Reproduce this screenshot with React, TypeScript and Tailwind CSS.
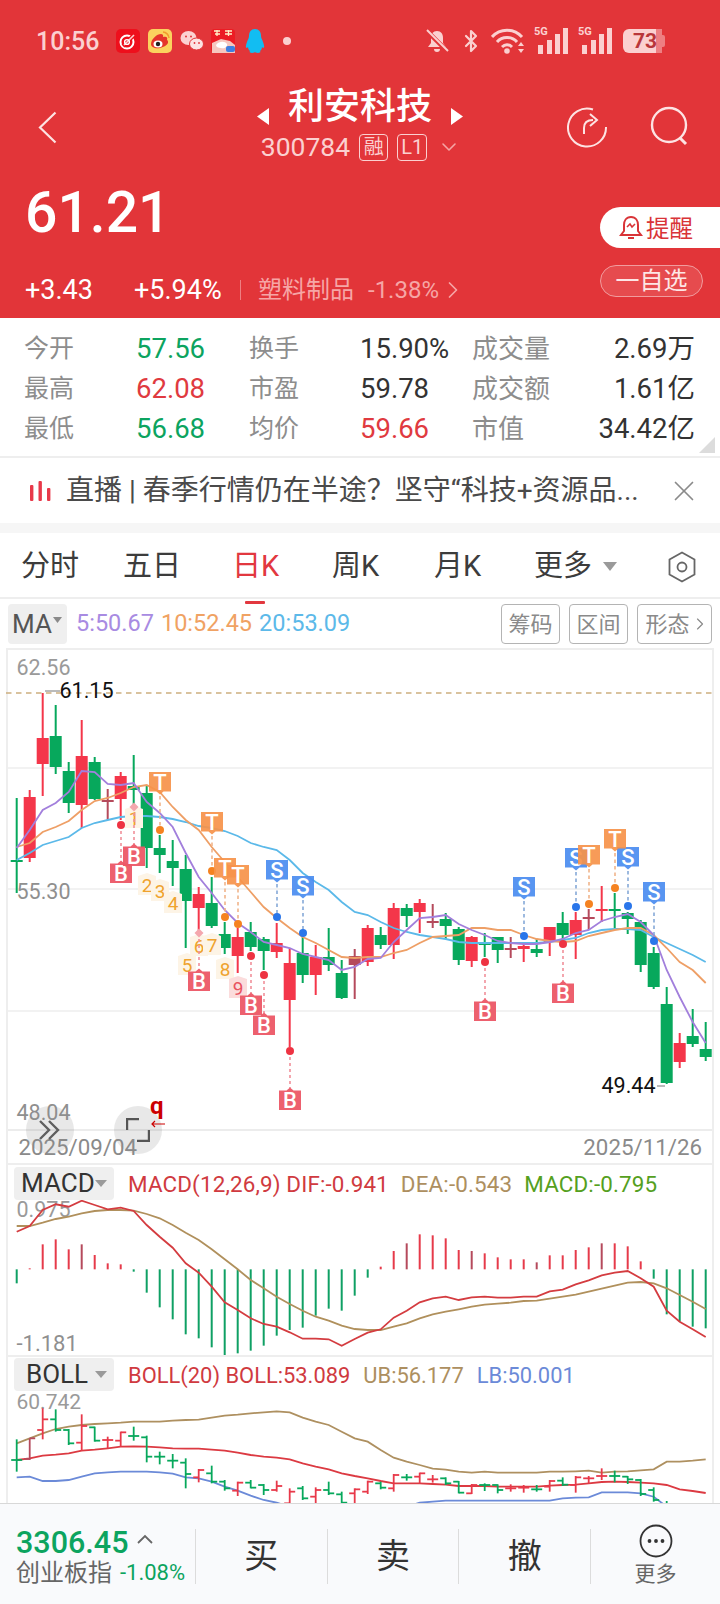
import React from "react";
import { ChevronRight, ChevronDown, X, Bluetooth } from "lucide-react";

const RED = "#f4364a";
const DARK_RED = "#b54a5c";
const GREEN = "#07a85c";

const cx = (i: number) => 16.7 + 13 * i;

// [colour, high, low, bodyTop, bodyBottom]; d = muted doji red
type Candle = [string, number, number, number, number];
const candles: Candle[] = [
  ["g", 798, 893, 860, 861.5], ["r", 790, 862, 797, 858], ["r", 693, 796, 738, 764], ["g", 705, 774, 736, 767],
  ["g", 762, 813, 771, 803], ["r", 720, 828, 756, 805], ["g", 757, 800, 762, 799], ["d", 789, 820, 800, 801],
  ["r", 772, 820, 776, 799], ["g", 755, 807, 786, 790], ["g", 785, 868, 793, 848], ["g", 835, 873, 848, 855],
  ["g", 840, 886, 861, 868], ["g", 855, 948, 869, 901], ["r", 887, 933, 894, 908], ["g", 877, 928, 903, 926],
  ["g", 922, 954, 934, 948], ["r", 928, 973, 937, 956], ["g", 922, 951, 932, 947], ["g", 937, 970, 939, 951],
  ["r", 923, 958, 943, 952], ["r", 948, 1047, 963, 1000], ["g", 937, 983, 953, 975], ["r", 945, 995, 957, 975],
  ["g", 928, 971, 957, 965], ["g", 960, 999, 973, 998], ["d", 949, 999, 956, 965], ["r", 925, 966, 928, 962],
  ["g", 927, 949, 935, 945], ["r", 903, 959, 908, 945], ["g", 904, 927, 908, 916], ["r", 899, 933, 903, 912],
  ["d", 904, 928, 921, 922], ["g", 913, 939, 919, 926], ["g", 927, 965, 929, 960], ["r", 936, 967, 937, 961],
  ["g", 933, 957, 943, 944], ["g", 937, 963, 937, 950], ["d", 937, 958, 948, 949], ["r", 942, 962, 946, 949],
  ["g", 939, 957, 949, 953], ["r", 927, 956, 927, 942], ["g", 912, 943, 923, 935], ["r", 912, 959, 920, 935],
  ["d", 909, 930, 917, 918.5], ["r", 886, 922, 909, 911], ["g", 893, 928, 909, 911], ["g", 912, 934, 913, 919],
  ["g", 920, 972, 922, 965], ["g", 947, 989, 953, 987], ["g", 987, 1084, 1004, 1083], ["r", 1033, 1068, 1043, 1062],
  ["g", 1009, 1047, 1036, 1044], ["g", 1022, 1061, 1049, 1057],
];

const ma5 = [848,830,810,803,792,771,772,784,785,783,802,813,827,853,877,893,910,923,932,942,945,948,954,957,960,970,967,959,958,942,930,918,917,915,924,930,935,941,943,944,944,942,939,933,930,921,917,914,922,935,970,997,1022,1043];
const ma10 = [847,843,832,827,821,810,801,798,793,787,785,792,807,820,830,847,862,877,892,907,918,928,937,943,950,957,958,957,957,953,950,943,937,936,935,928,928,930,930,935,939,941,942,941,936,933,930,928,928,935,948,962,970,983];
const ma20 = [860,853,845,841,837,828,823,820,817,816,816,817,819,822,826,828,831,836,843,847,850,860,873,882,890,902,912,915,922,928,932,935,937,939,942,943,943,943,943,943,943,942,940,938,933,930,929,929,930,937,943,949,955,962];

const dif = [245,228,180,163,170,152,165,178,173,183,225,260,293,340,368,410,457,480,505,522,530,547,566,566,568,587,567,548,538,503,482,457,445,440,450,442,440,443,443,440,440,424,419,403,391,376,368,363,385,410,482,515,538,561];
const dea = [228,228,218,207,200,190,183,180,180,182,192,205,225,248,270,298,328,358,390,415,440,462,482,500,512,527,537,540,540,530,520,505,493,485,478,470,464,461,458,453,452,446,440,434,425,416,407,398,396,400,415,435,455,477];
const hist = [400,355,283,268,298,283,315,340,343,365,428,472,508,553,565,592,617,610,602,587,557,540,533,497,476,482,437,383,350,303,280,253,256,265,300,303,310,322,328,328,337,316,316,300,292,280,280,289,334,386,493,515,530,535];

const ub = [280,265,250,237,230,225,222,220,218,215,215,215,212,210,209,203,197,194,190,187,184,187,203,215,225,245,265,275,300,323,335,345,356,359,365,368,365,368,368,368,368,365,365,364,362,368,365,364,361,358,335,335,332,328];
const mid = [330,325,317,314,310,302,299,295,290,289,290,292,295,296,296,299,302,308,315,320,323,328,340,350,358,370,378,385,393,400,400,400,402,404,408,408,408,410,410,410,410,407,405,404,400,396,395,396,398,400,405,418,423,429];
const lb = [382,380,393,393,390,380,370,367,365,365,365,367,371,382,385,395,410,422,437,450,458,470,478,485,490,495,495,495,490,480,470,458,455,452,452,452,452,452,452,452,452,452,445,443,442,427,427,427,430,440,470,500,520,540];

// [colour, high, low, open, close] in panel units of a third of a pixel
const bars: [string, number, number, number, number][] = [
  ["g",268,365,330,330],["d",265,330,327,265],["r",175,268,240,208],["g",178,245,208,240],["g",237,285,240,280],
  ["r",193,302,278,228],["g",230,275,232,272],["r",260,295,270,270],["r",245,290,272,247],["g",230,272,258,258],
  ["g",257,337,262,320],["g",305,343,320,320],["g",312,355,332,332],["g",325,415,338,372],["r",357,397,382,360],
  ["g",347,400,370,395],["g",390,422,395,415],["r",395,438,422,398],["g",390,415,398,413],["g",402,435,405,420],
  ["r",392,425,420,408],["r",415,470,460,425],["g",408,450,415,445],["r",412,470,440,420],["g",395,435,420,430],
  ["g",425,470,433,458],["r",415,470,430,418],["r",392,432,425,395],["g",395,418,400,413],["r",372,425,415,375],
  ["g",372,392,382,382],["r",368,400,380,370],["r",375,398,388,388],["g",382,405,385,400],["g",393,430,395,428],
  ["r",402,432,430,405],["g",400,423,405,405],["g",403,430,405,420],["r",403,425,415,415],["r",405,428,413,413],
  ["g",405,425,418,418],["r",390,425,410,393],["g",382,408,392,404],["r",378,428,405,382],["r",378,400,385,385],
  ["r",355,390,378,378],["g",362,397,378,378],["g",378,402,380,388],["g",387,438,390,432],["g",412,455,420,450],
  ["g",453,490,470,480],
];

const line = (ys: number[], f: (v: number) => number = (v) => v) =>
  ys.map((v, i) => `${cx(i).toFixed(1)},${f(v).toFixed(1)}`).join(" ");

type Sig = { x: number; top: number; dot: number; diamond?: boolean };
const buys: Sig[] = [
  { x: 121, top: 861, dot: 825 }, { x: 134, top: 844, dot: 807, diamond: true }, { x: 199, top: 969, dot: 933, diamond: true },
  { x: 251, top: 993, dot: 956 }, { x: 264, top: 1013, dot: 975 }, { x: 290, top: 1088, dot: 1051 },
  { x: 485, top: 999, dot: 962 }, { x: 563, top: 981, dot: 944 },
];
const tops: Sig[] = [
  { x: 160, top: 772, dot: 830 }, { x: 212, top: 812, dot: 871 }, { x: 225, top: 858, dot: 917 }, { x: 238, top: 865, dot: 924 },
  { x: 589, top: 845, dot: 904 }, { x: 615, top: 829, dot: 888 },
];
const sells: Sig[] = [
  { x: 277, top: 860, dot: 917 }, { x: 303, top: 876, dot: 933 }, { x: 524, top: 877, dot: 936 }, { x: 576, top: 848, dot: 907 },
  { x: 628, top: 847, dot: 906 }, { x: 654, top: 882, dot: 941 },
];
const counts: [string, number, number][] = [
  ["1", 134, 818], ["2", 147, 885], ["3", 160, 891], ["4", 173, 903], ["5", 187, 965], ["6", 199, 946], ["7", 212, 945], ["8", 225, 969],
];

function DownFlag({ s, fill, dash, dotFill, label }: { s: Sig; fill: string; dash: string; dotFill: string; label: string }) {
  return (
    <g>
      <line x1={s.x} x2={s.x} y1={s.top + 24} y2={s.dot} stroke={dash} strokeWidth={1.6} strokeDasharray="3.5 3" />
      <circle cx={s.x} cy={s.dot} r={4} fill={dotFill} />
      <path d={`M${s.x - 11} ${s.top}h22v19.5h-7.5l-3.5 3-3.5-3h-7.5z`} fill={fill} fillOpacity={0.92} />
      <text x={s.x} y={s.top + 18} textAnchor="middle" fontSize={22} fontWeight={500} fill="#fff">{label}</text>
    </g>
  );
}

function BuyFlag({ s }: { s: Sig }) {
  return (
    <g>
      <line x1={s.x} x2={s.x} y1={s.dot} y2={s.top} stroke="#f0909a" strokeWidth={1.6} strokeDasharray="3 3" />
      {s.diamond ? (
        <path d={`M${s.x} ${s.dot - 4.5}l4.5 4.5-4.5 4.5-4.5-4.5z`} fill="#f4a7ad" />
      ) : (
        <circle cx={s.x} cy={s.dot} r={4} fill="#ee3342" />
      )}
      <path d={`M${s.x - 11} ${s.top + 2.5}h7.5l3.5-3 3.5 3h7.5v19.5h-22z`} fill="#ec5766" fillOpacity={0.95} />
      <text x={s.x} y={s.top + 20} textAnchor="middle" fontSize={22} fontWeight={500} fill="#fff">B</text>
    </g>
  );
}

function CountTag({ n, x, y, pink }: { n: string; x: number; y: number; pink?: boolean }) {
  return (
    <g>
      <path d={`M${x - 9} ${y - 9}l9-3 9 3v19h-18z`} fill={pink ? "#fbdcdc" : "#fdf4e6"} />
      <text x={x} y={y + 7} textAnchor="middle" fontSize={19} fill={pink ? "#e8515f" : "#efa32e"}>{n}</text>
    </g>
  );
}

function PriceChart() {
  const gridYs = [768, 889, 1011];
  return (
    <svg viewBox="0 648 720 515" className="absolute inset-0 h-full w-full">
      {gridYs.map((y) => (
        <line key={y} x1={8} x2={712} y1={y} y2={y} stroke="#f2f2f2" strokeWidth={2} />
      ))}
      <line x1={8} x2={712} y1={1130} y2={1130} stroke="#ececec" strokeWidth={2} />
      <line x1={6} x2={712} y1={693} y2={693} stroke="#cdaf7f" strokeWidth={1.6} strokeDasharray="5.5 4.5" />
      <text x={16.5} y={675} fontSize={21.5} fill="#9a9a9a">62.56</text>
      <text x={16.5} y={899} fontSize={21.5} fill="#8f8f8f">55.30</text>
      <text x={16.5} y={1120} fontSize={21.5} fill="#8f8f8f">48.04</text>
      {candles.map(([c, hi, lo, t, b], i) => {
        const col = c === "g" ? GREEN : c === "r" ? RED : DARK_RED;
        return (
          <g key={i}>
            <line x1={cx(i)} x2={cx(i)} y1={hi} y2={lo} stroke={col} strokeWidth={2} />
            <rect x={cx(i) - 6} y={t} width={12} height={Math.max(b - t, 2)} fill={col} />
          </g>
        );
      })}
      <polyline points={line(ma20)} fill="none" stroke="#5bb9e9" strokeWidth={1.8} />
      <polyline points={line(ma10)} fill="none" stroke="#ee9f66" strokeWidth={1.8} />
      <polyline points={line(ma5)} fill="none" stroke="#a27fdc" strokeWidth={1.8} />
      <line x1={45} x2={60} y1={691} y2={691} stroke="#777" strokeWidth={1} />
      <text x={59.5} y={698} fontSize={21.5} fill="#111">61.15</text>
      <text x={601.5} y={1093} fontSize={21.5} fill="#111">49.44</text>
      <line x1={657} x2={665} y1={1086} y2={1086} stroke="#777" strokeWidth={1} />
      {counts.map(([n, x, y]) => <CountTag key={n} n={n} x={x} y={y} />)}
      <CountTag n="9" x={238} y={988} pink />
      {buys.map((s) => <BuyFlag key={s.x} s={s} />)}
      {sells.map((s) => <DownFlag key={s.x} s={s} fill="#4a8cf0" dash="#85a9d8" dotFill="#2a76ea" label="S" />)}
      {tops.map((s) => <DownFlag key={s.x} s={s} fill="#f6924a" dash="#f0b48a" dotFill="#f58220" label="T" />)}
      <text x={18.5} y={1155} fontSize={22.3} fill="#8a8a8a">2025/09/04</text>
      <text x={702} y={1155} textAnchor="end" fontSize={22.3} fill="#8a8a8a">2025/11/26</text>
    </svg>
  );
}

function MacdChart() {
  const y = (z: number) => 1150 + z / 3;
  return (
    <svg viewBox="0 1163 720 192" className="absolute inset-0 h-full w-full">
      <text x={16.5} y={1217} fontSize={21.5} fill="#9a9a9a">0.975</text>
      <text x={16.5} y={1351} fontSize={22} fill="#8f8f8f">-1.181</text>
      {hist.map((z, i) => (
        <line key={i} x1={cx(i)} x2={cx(i)} y1={y(358)} y2={y(z)} stroke={z > 358 ? "#0fa064" : i % 5 === 0 ? DARK_RED : "#e63a4a"} strokeWidth={2} />
      ))}
      <polyline points={line(dea, y)} fill="none" stroke="#b0905c" strokeWidth={1.8} />
      <polyline points={line(dif, y)} fill="none" stroke="#d43c40" strokeWidth={1.8} />
    </svg>
  );
}

function BollChart() {
  const y = (z: number) => 1350 + z / 3;
  return (
    <svg viewBox="0 1355 720 148" className="absolute inset-0 h-full w-full">
      <text x={16.5} y={1409} fontSize={21} fill="#9a9a9a">60.742</text>
      <polyline points={line(ub, y)} fill="none" stroke="#ae9060" strokeWidth={1.8} />
      <polyline points={line(lb, y)} fill="none" stroke="#6b8ad8" strokeWidth={1.8} />
      <polyline points={line(mid, y)} fill="none" stroke="#dc3a42" strokeWidth={1.8} />
      {bars.map(([c, hi, lo, o, cl], i) => {
        const col = c === "g" ? GREEN : c === "r" ? "#e8394a" : DARK_RED;
        return (
          <g key={i} stroke={col} strokeWidth={1.8}>
            <line x1={cx(i)} x2={cx(i)} y1={y(hi)} y2={y(lo)} />
            <line x1={cx(i) - 5.5} x2={cx(i)} y1={y(o)} y2={y(o)} />
            <line x1={cx(i)} x2={cx(i) + 5.5} y1={y(cl)} y2={y(cl)} />
          </g>
        );
      })}
    </svg>
  );
}

function AppIcons() {
  return (
    <div className="flex items-center">
      <svg width="24" height="24" viewBox="0 0 24 24" className="ml-[17px]">
        <rect width="24" height="24" rx="5" fill="#ee0f1c" />
        <circle cx="11" cy="13" r="6.5" fill="none" stroke="#fff" strokeWidth="2" />
        <path d="M7 17 19 5" stroke="#ee0f1c" strokeWidth="4" />
        <path d="M8 16 18 6" stroke="#fbd0d0" strokeWidth="1.6" />
        <circle cx="11" cy="13" r="2.4" fill="none" stroke="#fff" strokeWidth="1.4" />
      </svg>
      <svg width="24" height="24" viewBox="0 0 24 24" className="ml-[8px]">
        <rect width="24" height="24" rx="5" fill="#fbd35e" />
        <path d="M3 15c0-5 6-10 10-10 3 0 2 3 2 3 3-1 5 0 4 3 2 1 2 6-7 8-5 1-9-1-9-4z" fill="#e5352b" />
        <ellipse cx="10" cy="15" rx="4.5" ry="3.6" fill="#fff" />
        <circle cx="10" cy="15" r="2.2" fill="#222" />
        <path d="M15 3c3 0 6 3 6 6" fill="none" stroke="#f29a2e" strokeWidth="1.5" />
      </svg>
      <svg width="24" height="24" viewBox="0 0 24 24" className="ml-[8px]">
        <ellipse cx="8.5" cy="9" rx="8" ry="7" fill="#fcd2d2" />
        <ellipse cx="16.5" cy="15" rx="7" ry="6" fill="#fde3e3" stroke="#e23539" strokeWidth="1" />
        <circle cx="6" cy="7.5" r="1" fill="#e23539" />
        <circle cx="11" cy="7.5" r="1" fill="#e23539" />
        <circle cx="14.5" cy="14" r=".9" fill="#e23539" />
        <circle cx="19" cy="14" r=".9" fill="#e23539" />
      </svg>
      <svg width="24" height="24" viewBox="0 0 24 24" className="ml-[7px]">
        <rect width="24" height="24" rx="4" fill="#ec1c24" />
        <path d="M3 2h6M4 5h5M6 1v6M14 2h7M17.5 1v6M14 5h7" stroke="#fff1c8" strokeWidth="1.3" />
        <path d="M1 24V14l9-4 9 2 5 4v8z" fill="#f6c7bf" />
        <path d="M5 16c3-4 9-4 11-1 1 3-3 5-6 4-3 0-5-1-5-3z" fill="#fff" />
        <rect x="15" y="17" width="9" height="6" rx="2" fill="#3f7fe0" />
      </svg>
      <svg width="20" height="24" viewBox="0 0 20 24" className="ml-[10px]">
        <path d="M10 0c4 0 6 3 6 7 0 2 1 3 2 6 1 3 2 6 0 6l-1-1c0 2-1 3-2 4 1 1 0 2-2 2-2 0-3-1-3-1s-1 1-3 1c-2 0-3-1-2-2-1-1-2-2-2-4l-1 1c-2 0-1-3 0-6 1-3 2-4 2-6 0-4 2-7 6-7z" fill="#12bdf2" />
      </svg>
      <span className="ml-[18px] h-[8px] w-[8px] rounded-full bg-[#fbd0d0]" />
    </div>
  );
}

function SignalIcon() {
  return (
    <div className="relative h-[26px] w-[34px]">
      <span className="absolute left-0 top-[-2px] text-[11px] font-bold leading-[12px] text-[#fbd0d0]">5G</span>
      <svg width="34" height="26" viewBox="0 0 34 26" className="absolute inset-0">
        <rect x="4" y="17" width="5" height="9" fill="#fbd0d0" />
        <rect x="13" y="12" width="5" height="14" fill="#fbd0d0" />
        <rect x="21" y="6" width="5" height="20" fill="#fbd0d0" />
        <rect x="29" y="0" width="5" height="26" fill="#fbd0d0" />
      </svg>
    </div>
  );
}

function StatusBar() {
  return (
    <div className="flex h-[82px] items-center pl-[36px] pr-[53px] text-[#fbd0d0]">
      <span className="text-[25px] font-medium leading-none">10:56</span>
      <AppIcons />
      <div className="ml-auto flex items-center">
        <svg width="24" height="24" viewBox="0 0 24 24">
          <path d="M12 2c-4 0-6 3-6 7v5l-3 4h18l-3-4V9c0-4-2-7-6-7zM9 20a3 3 0 0 0 6 0z" fill="#fbd0d0" />
          <path d="M1 1 23 23" stroke="#e23539" strokeWidth="4.5" />
          <path d="M2 1 23 22" stroke="#fbd0d0" strokeWidth="2" />
        </svg>
        <Bluetooth size={24} strokeWidth={2.2} className="ml-[10px]" />
        <svg width="34" height="26" viewBox="0 0 34 26" className="ml-[8px]">
          <path d="M1 9C9 0 23 0 31 9M6 14c5-6 15-6 20 0M11 19c3-3 7-3 10 0" fill="none" stroke="#fbd0d0" strokeWidth="3" />
          <circle cx="16" cy="23" r="2.8" fill="#fbd0d0" />
          <path d="M30 14l3 4h-6zM30 25l3-4h-6z" fill="#fbd0d0" />
        </svg>
        <div className="ml-[9px]"><SignalIcon /></div>
        <div className="ml-[10px]"><SignalIcon /></div>
        <div className="relative ml-[11px] flex h-[24px] w-[44px]">
          <div className="flex h-full w-[33px] items-center justify-end rounded-l-[6px] bg-[#fbd0d0]" />
          <div className="h-full w-[6px] bg-[#ee7f82]" />
          <div className="my-auto h-[12px] w-[3px] rounded-r-[2px] bg-[#ee7f82]" />
          <span className="absolute left-[10px] top-0 text-[21px] font-bold leading-[24px] text-[#b9363a]">73</span>
        </div>
      </div>
    </div>
  );
}

function NavRow() {
  return (
    <div className="grid h-[84px] grid-cols-[1fr_auto_1fr] pt-[5px]">
      <div className="flex items-center pl-[38px]">
        <svg width="19" height="33" viewBox="0 0 19 33" fill="none" stroke="#fde3e3" strokeWidth="2.2">
          <path d="M17.5 1.5 2 16.5l15.5 15" />
        </svg>
      </div>
      <div className="flex flex-col items-center">
        <div className="flex h-[40px] items-center">
          <svg width="12" height="17" viewBox="0 0 12 17" className="mt-[18px]"><path d="M12 0v17L0 8.5z" fill="#fff" /></svg>
          <span className="mx-[19px] text-[36px] font-medium leading-[40px] text-white">利安科技</span>
          <svg width="12" height="17" viewBox="0 0 12 17" className="mt-[18px]"><path d="M0 0v17L12 8.5z" fill="#fff" /></svg>
        </div>
        <div className="flex h-[40px] items-center gap-[9px] pl-[2px] text-[#fbd0d0]">
          <span className="text-[26.5px] leading-none">300784</span>
          <span className="flex h-[27px] w-[29px] items-center justify-center rounded-[4px] border border-[#fbd0d0] text-[20px] leading-none">融</span>
          <span className="flex h-[27px] w-[30px] items-center justify-center rounded-[4px] border border-[#fbd0d0] text-[20px] leading-none">L1</span>
          <ChevronDown size={24} strokeWidth={1.6} className="ml-px text-[#f5a5a5]" />
        </div>
      </div>
      <div className="flex items-center justify-end gap-[40px] pr-[30px]">
        <svg width="42" height="42" viewBox="0 0 42 42" fill="none" stroke="#fde3e3" strokeWidth="2">
          <path d="M27 3.5A19 19 0 1 0 40 21" />
          <path d="M18 28v-6c0-5 3-8 9-8" />
          <path d="M24 8l7 6-7 6" />
        </svg>
        <svg width="42" height="42" viewBox="0 0 42 42" fill="none" stroke="#fde3e3" strokeWidth="2.4">
          <circle cx="21" cy="19" r="17" />
          <path d="M32 32l6 6" strokeWidth="3" />
        </svg>
      </div>
    </div>
  );
}

function QuoteRow() {
  return (
    <div className="flex items-start">
      <div className="flex-1 pl-[25px]">
        <div className="mt-[17px] h-[60px] text-[57px] font-medium leading-[60px] text-white">61.21</div>
        <div className="mt-[27px] flex h-[40px] items-center text-[27px]">
          <span className="w-[109px] text-white">+3.43</span>
          <span className="w-[106px] text-white">+5.94%</span>
          <span className="h-[20px] w-px bg-[#ee7f82]" />
          <span className="ml-[17px] text-[24px] text-[#f6a6a6]">塑料制品</span>
          <span className="ml-[14px] text-[24px] text-[#f6a6a6]">-1.38%</span>
          <ChevronRight size={28} strokeWidth={1.5} className="ml-0 text-[#f6a6a6]" />
        </div>
      </div>
      <div className="w-[120px] pt-[41px]">
        <div className="flex h-[41px] items-center rounded-l-[21px] bg-white pl-[19px] text-[23.5px] text-[#d93438]">
          <svg width="24" height="26" viewBox="0 0 24 26" fill="none" stroke="#d93438" strokeWidth="2">
            <path d="M12 2c-5 0-7 4-7 8v6l-3 4h20l-3-4v-6c0-4-2-8-7-8z" />
            <path d="M8 12l3-3 2 3 3-3" strokeWidth="1.6" />
            <path d="M9 23h6" />
          </svg>
          <span className="ml-[3px] translate-y-[2px]">提醒</span>
        </div>
        <div className="mt-[17px] flex h-[32px] w-[103px] items-center justify-center rounded-full border border-[#f19c9e] bg-[#e64b4e] text-[24px] text-[#fde6e6]">一自选</div>
      </div>
    </div>
  );
}

function Stat({ label, value, tone }: { label: string; value: string; tone: string }) {
  return (
    <>
      <span className="text-[25px] leading-[40px] text-[#8d8d8d]">{label}</span>
      <span className={`text-[27.5px] leading-[40px] ${tone}`}>{value}</span>
    </>
  );
}

function StatsTable() {
  const g = "text-[#0ca45f]";
  const r = "text-[#e03a40]";
  const k = "text-[#333]";
  const tail = "justify-self-end whitespace-nowrap text-[27.5px] leading-[40px] text-[#333]";
  const head = "whitespace-nowrap text-[26px] leading-[40px] text-[#8d8d8d]";
  return (
    <div className="relative h-[140px] border-b-2 border-[#eeeeee] pt-[11px]">
      <div className="grid grid-cols-[112px_113px_111px_112px_100px_123px] pl-[24px]">
        <Stat label="今开" value="57.56" tone={g} />
        <Stat label="换手" value="15.90%" tone={k} />
        <span className={head}>成交量</span>
        <span className={tail}>2.69万</span>
        <Stat label="最高" value="62.08" tone={r} />
        <Stat label="市盈" value="59.78" tone={k} />
        <span className={head}>成交额</span>
        <span className={tail}>1.61亿</span>
        <Stat label="最低" value="56.68" tone={g} />
        <Stat label="均价" value="59.66" tone={r} />
        <span className={head}>市值</span>
        <span className={tail}>34.42亿</span>
      </div>
      <svg width="16" height="16" viewBox="0 0 16 16" className="absolute bottom-[3px] right-[5px]"><path d="M16 0v16H0z" fill="#dcdcdc" /></svg>
    </div>
  );
}

function Banner() {
  return (
    <div className="flex h-[65px] items-center pl-[30px] pt-px">
      <svg width="21" height="20" viewBox="0 0 21 20" fill="#e8394a">
        <rect x="0" y="4" width="3.4" height="16" rx="1" />
        <rect x="8.5" y="0" width="3.4" height="20" rx="1" />
        <rect x="17" y="7" width="3.4" height="13" rx="1" />
      </svg>
      <span className="ml-[15px] w-[601px] whitespace-nowrap text-[28px] leading-none text-[#4a4a4a]">直播 | 春季行情仍在半途？坚守“科技+资源品...</span>
      <X size={34} strokeWidth={1.2} className="text-[#8a8a8a]" />
    </div>
  );
}

function PeriodTabs() {
  return (
    <div className="relative grid h-[66px] grid-cols-[102px_109px_100px_102px_100px_131px_auto] items-center border-b-2 border-[#eeeeee] pl-[21px] pt-[3px] text-[29px] text-[#3c3c3c]">
      <span>分时</span>
      <span>五日</span>
      <span className="relative text-[#e2383f]">
        日K
        <span className="absolute bottom-[-16px] left-[13px] h-[3px] w-[20px] rounded-[1px] bg-[#e2383f]" />
      </span>
      <span>周K</span>
      <span>月K</span>
      <span className="flex items-center">
        更多
        <svg width="14" height="9" viewBox="0 0 14 9" className="ml-[11px]"><path d="M0 0h14L7 9z" fill="#9a9a9a" /></svg>
      </span>
      <svg width="28" height="32" viewBox="0 0 28 32" fill="none" stroke="#666" strokeWidth="1.8" className="ml-[3px]">
        <path d="M14 1.5 26.5 8.5v15L14 30.5 1.5 23.5v-15z" />
        <circle cx="14" cy="16" r="4.5" />
      </svg>
    </div>
  );
}

function MaRow() {
  const chip = "flex h-[40px] items-center justify-center rounded-[4px] border border-[#b4b4b4] text-[22px] text-[#8a8a8a]";
  return (
    <div className="flex h-[49px] items-center px-[8px] pt-px">
      <div className="flex h-[40px] w-[59px] items-center rounded-[4px] bg-[#efefef] pl-[4px] text-[26px] text-[#555]">
        MA
        <svg width="9" height="6" viewBox="0 0 9 6" className="mb-[8px] ml-px"><path d="M0 0h9L4.5 6z" fill="#8a8a8a" /></svg>
      </div>
      <span className="ml-[9px] text-[23.5px] text-[#a88be2]">5:50.67</span>
      <span className="ml-[7px] text-[23.5px] text-[#f0a263]">10:52.45</span>
      <span className="ml-[7px] text-[23.5px] text-[#5cb9e9]">20:53.09</span>
      <div className={`${chip} ml-auto w-[59px]`}>筹码</div>
      <div className={`${chip} ml-[9px] w-[59px]`}>区间</div>
      <div className={`${chip} ml-[9px] w-[75px]`}>
        形态
        <ChevronRight size={20} strokeWidth={1.4} className="mr-[-6px]" />
      </div>
    </div>
  );
}

function IndicatorChip({ name }: { name: string }) {
  return (
    <div className="flex h-[33px] w-[100px] items-center justify-center rounded-[4px] bg-[#efefef] text-[26px] text-[#333]">
      <span className="w-[72px] text-center">{name}</span>
      <svg width="12" height="7" viewBox="0 0 12 7" className="ml-[2px]"><path d="M0 0h12L6 7z" fill="#9a9a9a" /></svg>
    </div>
  );
}

function PriceSection() {
  return (
    <section className="relative mx-[6px] h-[515px] w-[708px] border-x-2 border-t-2 border-[#eeeeee]">
      <div className="absolute left-[-8px] top-[-2px] h-[515px] w-[720px]">
        <PriceChart />
        <div className="absolute left-[26px] top-[458px] flex h-[48px] w-[48px] items-center justify-center rounded-full bg-[#8a8a8a]/20">
          <svg width="24" height="20" viewBox="0 0 24 20" fill="none" stroke="#5f5f5f" strokeWidth="2.4">
            <path d="M2 1l9 9-9 9M11 1l9 9-9 9" />
          </svg>
        </div>
        <div className="absolute left-[114px] top-[458px] flex h-[48px] w-[48px] items-center justify-center rounded-full bg-[#8a8a8a]/20">
          <svg width="24" height="24" viewBox="0 0 24 24" fill="none" stroke="#555" strokeWidth="2.4">
            <path d="M1 12V1h12M23 12v11H11" />
          </svg>
        </div>
        <span className="absolute left-[150px] top-[446px] text-[24px] font-bold leading-none text-[#cc0000]">q</span>
        <svg width="14" height="8" viewBox="0 0 14 8" className="absolute left-[151px] top-[472px]" fill="none" stroke="#cc0000" strokeWidth="1.2">
          <path d="M14 4H1M4 1 1 4l3 3" />
        </svg>
      </div>
    </section>
  );
}

function MacdSection() {
  return (
    <section className="relative mx-[6px] h-[192px] w-[708px] overflow-hidden border-x-2 border-t-2 border-[#eeeeee]">
      <div className="absolute left-[-8px] top-[-2px] h-[192px] w-[720px]"><MacdChart /></div>
      <div className="relative flex items-center pl-[6px] pt-[2px]">
        <IndicatorChip name="MACD" />
        <div className="ml-[14px] flex translate-y-px gap-[12px] whitespace-nowrap text-[22.4px] tracking-[0.15px]">
          <span className="text-[#d03a40]">MACD(12,26,9) DIF:-0.941</span>
          <span className="text-[#ad8f60]">DEA:-0.543</span>
          <span className="text-[#55a01e]">MACD:-0.795</span>
        </div>
      </div>
    </section>
  );
}

function BollSection() {
  return (
    <section className="relative mx-[6px] h-[148px] w-[708px] overflow-hidden border-x-2 border-t-2 border-[#eeeeee]">
      <div className="absolute left-[-8px] top-[-2px] h-[148px] w-[720px]"><BollChart /></div>
      <div className="relative flex items-center pl-[6px] pt-px">
        <IndicatorChip name="BOLL" />
        <div className="ml-[14px] flex translate-y-[2px] gap-[13px] whitespace-nowrap text-[21.9px]">
          <span className="text-[#d03a40]">BOLL(20) BOLL:53.089</span>
          <span className="text-[#ad8f60]">UB:56.177</span>
          <span className="text-[#6b8ad8]">LB:50.001</span>
        </div>
      </div>
    </section>
  );
}

function TradeBar() {
  const divider = "h-[55px] w-px bg-[#dcdcdc]";
  const action = "flex-1 text-center text-[34px] text-[#333]";
  return (
    <footer className="flex h-[101px] items-center border-t border-[#d8d8d8] bg-[#f9fafc] pt-[4px]">
      <div className="w-[195px] pl-[16px]">
        <div className="flex items-center">
          <span className="text-[30.5px] font-medium leading-[34px] text-[#0ca45f]">3306.45</span>
          <svg width="16" height="10" viewBox="0 0 16 10" fill="none" stroke="#666" strokeWidth="1.8" className="mb-[8px] ml-[9px]"><path d="M1 9l7-7 7 7" /></svg>
        </div>
        <div className="flex items-center whitespace-nowrap leading-[26px]">
          <span className="text-[24px] text-[#666]">创业板指</span>
          <span className="ml-[8px] text-[22px] text-[#0ca45f]">-1.08%</span>
        </div>
      </div>
      <span className={divider} />
      <span className={action}>买</span>
      <span className={divider} />
      <span className={action}>卖</span>
      <span className={divider} />
      <span className={action}>撤</span>
      <span className={divider} />
      <div className="flex w-[129px] flex-col items-center">
        <svg width="34" height="34" viewBox="0 0 34 34" fill="none" stroke="#333" strokeWidth="1.8">
          <circle cx="17" cy="17" r="15.5" />
          <circle cx="10.5" cy="17" r="1" fill="#333" />
          <circle cx="17" cy="17" r="1" fill="#333" />
          <circle cx="23.5" cy="17" r="1" fill="#333" />
        </svg>
        <span className="mt-[2px] text-[21px] leading-[28px] text-[#666]">更多</span>
      </div>
    </footer>
  );
}

export default function App() {
  return (
    <div className="flex h-[1604px] w-[720px] flex-col overflow-hidden bg-white font-['Roboto','Noto_Sans_CJK_SC',sans-serif]">
      <header className="h-[318px] bg-[#e23539]">
        <StatusBar />
        <NavRow />
        <QuoteRow />
      </header>
      <StatsTable />
      <Banner />
      <div className="h-[10px] bg-[#f6f6f6]" />
      <PeriodTabs />
      <MaRow />
      <PriceSection />
      <MacdSection />
      <BollSection />
      <TradeBar />
    </div>
  );
}
